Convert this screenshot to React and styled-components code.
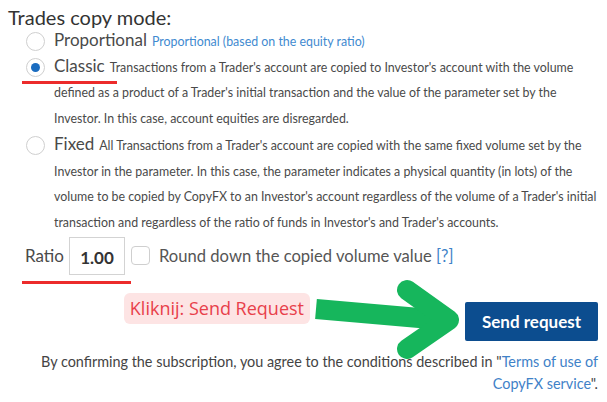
import React from 'react';
import styled, { createGlobalStyle } from 'styled-components';

const GlobalStyle = createGlobalStyle`
  html, body {
    margin: 0;
    padding: 0;
    background: #fff;
  }
  body {
    font-family: Lato, "Liberation Sans", sans-serif;
    color: #444;
  }
`;

const Page = styled.div`
  width: 607px;
  height: 402px;
  box-sizing: border-box;
  padding: 6px 9px 0 8px;
  overflow: hidden;
`;

const Title = styled.div`
  font-size: 20px;
  line-height: 22px;
  color: #333;
`;

const OptionList = styled.div`
  padding-left: 18px;
  margin-top: 1px;
`;

const Option = styled.div`
  position: relative;
  display: grid;
  grid-template-columns: 19px 1fr;
  column-gap: 9px;
  margin-top: ${p => p.$gap || 0}px;
`;

const Radio = styled.span`
  width: 19px;
  height: 19px;
  margin-top: 3px;
  box-sizing: border-box;
  border-radius: 50%;
  border: 1.5px solid #cfcfcf;
  display: flex;
  align-items: center;
  justify-content: center;

  &::after {
    content: '';
    display: ${p => (p.$checked ? 'block' : 'none')};
    width: 9px;
    height: 9px;
    border-radius: 50%;
    background: #1a6cc0;
  }
`;

const OptionText = styled.div`
  font-size: 12.4px;
  line-height: 25.7px;
  color: #4a4a4a;
  white-space: nowrap;
`;

const Label = styled.span`
  font-size: 17px;
  line-height: 1;
  color: #4a4a4a;
  margin-right: 5px;
`;

const Hint = styled.span`
  color: ${p => (p.$blue ? '#3f8ad0' : '#4a4a4a')};
`;

const Mark = styled.span`
  position: absolute;
  left: -4px;
  top: 26px;
  width: ${p => p.$width}px;
  height: 3px;
  background: #ec2b2b;
`;

const RatioRow = styled.div`
  display: flex;
  align-items: center;
  padding-left: 17px;
  margin-top: 1px;
  height: 38px;
`;

const RatioLabel = styled.span`
  font-size: 17px;
  color: #4a4a4a;
`;

const RatioInput = styled.div`
  width: 56px;
  height: 38px;
  box-sizing: border-box;
  margin-left: 5px;
  border: 1px solid #d3d3d3;
  display: flex;
  align-items: center;
  justify-content: center;
  padding-top: 3px;
  font-size: 17px;
  font-weight: 700;
  color: #333;
`;

const Checkbox = styled.span`
  width: 19px;
  height: 19px;
  box-sizing: border-box;
  margin-left: 6px;
  border: 1.5px solid #cfcfcf;
  border-radius: 4px;
`;

const CheckLabel = styled.span`
  margin-left: 9px;
  font-size: 16.6px;
  color: #555;
`;

const Link = styled.span`
  color: #3f82c8;
`;

const RatioMark = styled.div`
  width: 109px;
  height: 3px;
  margin: 6px 0 0 14px;
  background: #ec2b2b;
`;

const ActionRow = styled.div`
  display: flex;
  justify-content: flex-end;
  align-items: flex-start;
  margin-top: 6px;
  height: 51px;
`;

const Callout = styled.div`
  margin-top: 3px;
  padding: 0 6px;
  height: 31px;
  line-height: 31px;
  border-radius: 6px;
  background: #fde4e4;
  color: #e8404a;
  font-size: 18px;
  font-family: "Open Sans", sans-serif;
`;

const Arrow = styled.svg`
  position: relative;
  z-index: 1;
  flex: none;
  margin: -13px 0 -40px 0;
`;

const SendButton = styled.button`
  margin-top: 12px;
  width: 133px;
  height: 39px;
  border: none;
  border-radius: 2px;
  background: #0c4d8f;
  color: #fff;
  font-family: Lato, sans-serif;
  font-size: 17px;
  font-weight: 700;
  cursor: pointer;
`;

const Footer = styled.p`
  margin: 10px 0 0 0;
  text-align: right;
  font-size: 14.4px;
  line-height: 22px;
  color: #444;
`;

const classicLines = [
  "Transactions from a Trader's account are copied to Investor's account with the volume",
  "defined as a product of a Trader's initial transaction and the value of the parameter set by the",
  'Investor. In this case, account equities are disregarded.',
];

const fixedLines = [
  "All Transactions from a Trader's account are copied with the same fixed volume set by the",
  'Investor in the parameter. In this case, the parameter indicates a physical quantity (in lots) of the',
  "volume to be copied by CopyFX to an Investor's account regardless of the volume of a Trader's initial",
  "transaction and regardless of the ratio of funds in Investor's and Trader's accounts.",
];

const Lines = ({ lines }) =>
  lines.map((line, i) => (
    <React.Fragment key={i}>
      {i > 0 && <br />}
      {line}
    </React.Fragment>
  ));

const GreenArrow = () => (
  <Arrow width="155" height="82" viewBox="0 0 155 82">
    <line x1="6" y1="32" x2="138" y2="43.5" stroke="#16b65c" strokeWidth="20" />
    <polyline
      points="97,13 139,43 97,72"
      fill="none"
      stroke="#16b65c"
      strokeWidth="20"
      strokeLinecap="round"
      strokeLinejoin="round"
    />
  </Arrow>
);

export default function App() {
  return (
    <Page>
      <GlobalStyle />
      <Title>Trades copy mode:</Title>
      <OptionList>
        <Option>
          <Radio />
          <OptionText>
            <Label>Proportional</Label>
            <Hint $blue>Proportional (based on the equity ratio)</Hint>
          </OptionText>
        </Option>
        <Option>
          <Radio $checked />
          <OptionText>
            <Label>Classic</Label>
            <Hint>
              <Lines lines={classicLines} />
            </Hint>
          </OptionText>
          <Mark $width={95} />
        </Option>
        <Option $gap={1}>
          <Radio />
          <OptionText>
            <Label>Fixed</Label>
            <Hint>
              <Lines lines={fixedLines} />
            </Hint>
          </OptionText>
        </Option>
      </OptionList>
      <RatioRow>
        <RatioLabel>Ratio</RatioLabel>
        <RatioInput>1.00</RatioInput>
        <Checkbox />
        <CheckLabel>
          Round down the copied volume value <Link>[?]</Link>
        </CheckLabel>
      </RatioRow>
      <RatioMark />
      <ActionRow>
        <Callout>Kliknij: Send Request</Callout>
        <GreenArrow />
        <SendButton>Send request</SendButton>
      </ActionRow>
      <Footer>
        By confirming the subscription, you agree to the conditions described in "<Link>Terms of use of</Link>
        <br />
        <Link>CopyFX service</Link>".
      </Footer>
    </Page>
  );
}
